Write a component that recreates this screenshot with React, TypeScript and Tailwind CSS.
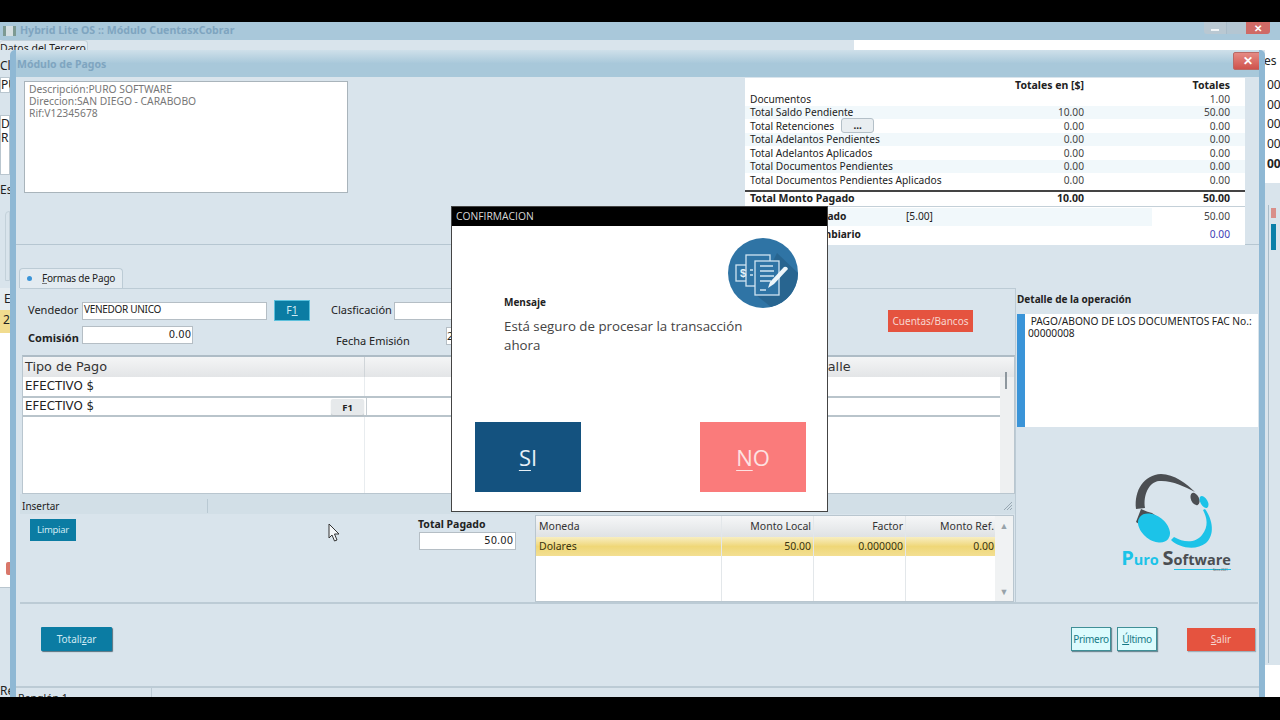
import React from "react";

const totals = [
  ["Documentos", "", "1.00"],
  ["Total Saldo Pendiente", "10.00", "50.00"],
  ["Total Retenciones", "0.00", "0.00"],
  ["Total Adelantos Pendientes", "0.00", "0.00"],
  ["Total Adelantos Aplicados", "0.00", "0.00"],
  ["Total Documentos Pendientes", "0.00", "0.00"],
  ["Total Documentos Pendientes Aplicados", "0.00", "0.00"],
];

function TotalRow({ row, index }: { row: string[]; index: number }) {
  return (
    <div className={`flex h-[13.5px] items-center pl-[5px] pr-[15px] leading-none ${index % 2 === 1 ? "bg-[#f1f8fb]" : ""}`}>
      <span className="flex flex-1 items-center">
        {row[0]}
        {index === 2 && (
          <span className="ml-[7px] flex h-[15px] w-[33px] items-center justify-center rounded-[3px] border border-[#b4c0c8] bg-[#e9eef1] pb-[2px] text-[10px] font-bold">
            ...
          </span>
        )}
      </span>
      <span className="w-[60px] text-right text-[#444]">{row[1]}</span>
      <span className="w-[146px] text-right text-[#444]">{row[2]}</span>
    </div>
  );
}

function DocsIcon() {
  return (
    <svg viewBox="-35 -35 70 70" className="h-[70px] w-[70px]">
      <circle r="35" fill="#2f74a5" />
      <path d="M-7 22 L14 -20 L35 0 A35 35 0 0 1 8 34 Z" fill="#286590" />
      <g fill="none" stroke="#cfe4f1" strokeWidth="1.3">
        <rect x="-27" y="-8" width="17" height="16" fill="#2f74a5" />
        <rect x="-17" y="-18" width="24" height="31" fill="#2f74a5" />
        <rect x="-8" y="-12" width="24" height="34" fill="#2f74a5" />
        <path d="M-3 -7H10M-3 -2H11M-3 3H11M-3 8H8M-13 -3H-10M-13 2H-10M-3 17H3" />
      </g>
      <text x="-23" y="4" fontSize="11" fontWeight="700" fill="#e4f1f8" fontFamily="'Liberation Sans', sans-serif">$</text>
      <path d="M5 15 L7 9 L21 -6 Q24 -7 25 -4 L11 11 Z" fill="#eef6fa" />
    </svg>
  );
}

function Logo() {
  return (
    <div className="flex w-[110px] flex-col items-center">
      <svg viewBox="1130 472 90 80" className="ml-[8px] h-[80px] w-[90px] self-start">
        <path d="M1137 509 C1135 490 1145 475 1162 474 C1175 474 1188 484 1196 492 C1185 486 1172 480 1160 481 C1150 482 1144 495 1146 508 Z" fill="#4b4e52" />
        <ellipse cx="1196" cy="499" rx="4" ry="6.5" transform="rotate(-25 1196 499)" fill="#4b4e52" />
        <ellipse cx="1205" cy="502" rx="3.6" ry="6.5" transform="rotate(-30 1205 502)" fill="#1cc3e8" />
        <path d="M1206 509 C1214 520 1216 535 1207 543 C1197 551 1180 548 1172 540 L1175 537 C1185 543 1197 543 1203 535 C1210 526 1208 518 1204 510 Z" fill="#1cc3e8" />
        <path d="M1137 522 L1142 509 L1149 512 L1143 526 Z M1146 511 L1153 513 L1160 518 L1151 518 Z" fill="#4b4e52" />
        <ellipse cx="1155" cy="528" rx="18" ry="12" transform="rotate(38 1155 528)" fill="#1cc3e8" />
      </svg>
      <div className="-mt-[4px] whitespace-nowrap font-['Open_Sans',sans-serif] font-bold leading-none">
        <span className="text-[20px] text-[#1cc3e8]">P</span>
        <span className="text-[14.5px] text-[#1cc3e8]">uro </span>
        <span className="text-[20px] text-[#4b4e52]">S</span>
        <span className="border-b border-[#1cc3e8] text-[14.5px] text-[#4b4e52]">oftware</span>
      </div>
      <div className="w-full pr-[3px] text-right text-[3px] leading-[5px] text-[#555]">Since 2021</div>
    </div>
  );
}

function MonedaCell({ children, className = "" }: { children: React.ReactNode; className?: string }) {
  return <div className={`border-r border-[#e3e7ea] px-[2px] ${className}`}>{children}</div>;
}

export default function App() {
  return (
    <div className="flex h-[720px] w-[1280px] flex-col overflow-hidden bg-black font-['Noto_Sans',sans-serif] text-[11px] text-[#222]">
      <div className="h-[22px] shrink-0" />
      <div className="relative flex-1 overflow-hidden bg-[#d9e4ec]">
        {/* ventana de atras */}
        <div className="flex h-[18px] items-center bg-[#a9c8da] text-[10.6px] font-bold text-[#7fa5c0]">
          <span className="ml-[3px] mr-[4px] h-[10px] w-[13px] border-x-[3px] border-[#7d9a93] bg-[#d5dfe2]" />
          Hybrid Lite OS :: Módulo CuentasxCobrar
          <div className="ml-auto mr-[10px] flex h-[18px] items-start">
            <span className="flex h-[12px] w-[22px] items-center justify-center rounded-bl-[3px] bg-[#b9c8d2]">
              <span className="mt-[3px] h-[2px] w-[8px] bg-white/80" />
            </span>
            <span className="h-[12px] w-[20px] border-l border-[#a9bcc9] bg-[#b4c6d2]" />
            <span className="flex h-[12px] w-[24px] items-center justify-center rounded-br-[3px] bg-[#cf6a66] text-[10px] font-bold leading-none text-white">✕</span>
          </div>
        </div>
        <div className="flex h-[10px] overflow-hidden">
          <div className="h-[14px] w-[88px] shrink-0 whitespace-nowrap rounded-t-[4px] border-r border-t border-[#c3d1da] bg-[#e3ebf1] text-[10.5px] leading-[14px]">
            <span className="underline">D</span>atos del Tercero
          </div>
          <div className="w-[766px]" />
          <div className="flex-1 bg-white" />
        </div>
        <div className="flex h-[647px]">
          <div className="w-[10px] overflow-hidden whitespace-nowrap text-[12px] leading-[14px]">
            <div className="mt-[9px]">Cl</div>
            <div className="mt-[4px] h-[16px] border border-[#b9c6cf] bg-white">PU</div>
            <div className="mt-[22px] h-[60px] border border-[#b9c6cf] bg-white pt-[1px]">
              D<br />R
            </div>
            <div className="mt-[8px]">Es</div>
            <div className="ml-[5px] mt-[14px] h-[70px] rounded-tl-[4px] border border-[#c3d1da]" />
            <div className="mt-[7px] h-[22px] bg-[#e5ecf1] pl-[4px] leading-[22px]">E</div>
            <div className="h-[23px] bg-[#f1dc8f] pl-[3px] leading-[20px]">2</div>
            <div className="relative h-[255px] border-b border-[#b9c6cf] bg-white">
              <span className="absolute bottom-[12px] left-[6px] h-[13px] w-[4px] rounded-l-[2px] bg-[#d9776a]" />
            </div>
            <div className="mt-[96px]">Re</div>
          </div>
          <div className="w-[1255px]" />
          <div className="flex-1 overflow-hidden whitespace-nowrap bg-white text-[12px] leading-[14px]">
            <div className="-ml-[1px] pt-[4px]">es</div>
            <div className="ml-[2px] mt-[10px]">00</div>
            <div className="ml-[2px] mt-[6px]">00</div>
            <div className="ml-[2px] mt-[5px]">00</div>
            <div className="ml-[2px] mt-[6px]">00</div>
            <div className="ml-[2px] mt-[6px] font-bold">00</div>
            <div className="mt-[12px] flex h-[482px] gap-[2px] bg-[#d9e4ec] pt-[22px]">
              <div className="h-[458px] w-[4px] border-r border-[#a9bcc9]" />
              <div className="mt-[3px] flex flex-col">
                <div className="h-[10px] w-[5px] bg-[#d98f8a]" />
                <div className="mt-[6px] h-[26px] w-[5px] bg-[#0b7fa8]" />
              </div>
            </div>
          </div>
        </div>

        {/* Modulo de Pagos */}
        <div className="absolute left-[10px] top-[28px] flex h-[647px] w-[1255px] flex-col overflow-hidden rounded-t-[5px] border-x-[6px] border-x-[#8fb8d4] bg-[#d9e4ec]">
          <div className="relative flex h-[27px] shrink-0 items-center bg-gradient-to-b from-[#cfe0ea] via-[#a8c8da] to-[#a8c8da] pl-px pt-[2px] text-[10.5px] font-bold text-[#7fa5c0]">
            Módulo de Pagos
            <span className="absolute right-[-3px] top-[2px] flex h-[18px] w-[29px] items-center justify-center rounded-[2px] border border-[#b96a66] bg-gradient-to-b from-[#e58a84] to-[#cf524c] text-[12px] font-bold text-white">✕</span>
          </div>

          <div className="flex h-[168px] shrink-0 border-b border-[#b6c6d1]">
            <div className="ml-[8px] mt-[4px] h-[112px] w-[324px] border border-[#a9b4bb] bg-white px-[4px] pt-[1px] text-[10.3px] leading-[12px] text-[#777]">
              Descripción:PURO SOFTWARE
              <br />
              Direccion:SAN DIEGO - CARABOBO
              <br />
              Rif:V12345678
            </div>
            <div className="ml-auto mr-[14px] mt-px h-[167px] w-[500px] bg-white text-[10.2px] text-[#222]">
              <div className="flex h-[14px] items-center pr-[15px] font-bold leading-none">
                <span className="flex-1 text-right text-[10.5px]">Totales en [$]</span>
                <span className="w-[146px] text-right text-[10.5px]">Totales</span>
              </div>
              {totals.map((row, i) => (
                <TotalRow key={row[0]} row={row} index={i} />
              ))}
              <div className="mt-[3px] flex h-[16px] items-center border-t-2 border-[#444] pl-[5px] pr-[15px] text-[10.5px] font-bold">
                <span className="flex-1">Total Monto Pagado</span>
                <span className="w-[60px] text-right">10.00</span>
                <span className="w-[146px] text-right">50.00</span>
              </div>
              <div className="flex h-[21px] items-center border-t border-[#c4d0d8] pr-[15px]">
                <div className="flex h-[18px] flex-1 items-center bg-[#f1f8fb] pl-[20px]">
                  <span className="w-[141px] font-bold">Monto Abonado</span>
                  <span>[5.00]</span>
                </div>
                <span className="w-[78px] text-right text-[#444]">50.00</span>
              </div>
              <div className="flex h-[17px] items-center pl-[6px] pr-[15px]">
                <span className="flex-1 font-bold">Diferencial Cambiario</span>
                <span className="text-[#3d3db5]">0.00</span>
              </div>
            </div>
          </div>

          <div className="flex h-[359px] shrink-0 pt-[23px]">
            <div className="ml-[4px] flex w-[995px] shrink-0 flex-col">
              <div className="-ml-px flex h-[20px] w-[104px] shrink-0 items-center rounded-t-[4px] border border-b-0 border-[#bccbd5] bg-[#e3ebf1] text-[10px] tracking-[-0.2px]">
                <span className="ml-[7px] mr-[10px] h-[5px] w-[5px] rounded-full bg-[#3a94d8]" />
                <span className="underline decoration-[#777] [text-decoration-skip-ink:none]">F</span>ormas de Pago
              </div>

              <div className="flex h-[67px] shrink-0 border-t border-[#bccbd5]">
                <div className="flex w-[600px] flex-col pl-[8px] pt-[11px]">
                  <div className="flex h-[21px] items-center">
                    <span className="w-[54px]">Vendedor</span>
                    <span className="flex h-[18px] w-[185px] items-center border border-[#b5bec5] bg-white pb-[2px] pl-[1px] text-[10px] tracking-[-0.3px]">VENEDOR UNICO</span>
                    <span className="ml-[7px] flex h-[21px] w-[36px] items-center justify-center border border-[#5cc0dc] bg-[#0b7ca3] text-[10.5px] text-[#cfeaf3]">
                      F<span className="underline">1</span>
                    </span>
                    <span className="ml-[21px] w-[63px]">Clasficación</span>
                    <span className="h-[18px] w-[150px] border border-[#b5bec5] bg-white" />
                  </div>
                  <div className="mt-[5px] flex h-[18px] items-center">
                    <span className="mt-[6px] w-[54px] font-bold">Comisión</span>
                    <span className="h-[18px] w-[111px] border border-[#b5bec5] bg-white pr-[1px] text-right font-['DejaVu_Sans',sans-serif] text-[10px] leading-[16px]">0.00</span>
                    <span className="ml-[143px] mt-[12px] w-[110px]">Fecha Emisión</span>
                    <span className="mt-[2px] h-[18px] w-[60px] border border-[#b5bec5] bg-white leading-[16px]">2</span>
                  </div>
                </div>
                <div className="ml-auto mr-[42px] mt-[21px] flex h-[22px] w-[85px] items-center justify-center bg-[#e5533f] text-[10px] text-[#f7d6cf]">Cuentas/Bancos</div>
              </div>

              <div className="ml-[2px] flex h-[139px] w-[993px] shrink-0 flex-col border border-t-[2px] border-[#b9c6cf] border-t-[#aebcc6] bg-white font-['DejaVu_Sans',sans-serif] text-[11.8px]">
                <div className="flex h-[20px] shrink-0 bg-gradient-to-b from-[#f4f5f6] to-[#e3e5e7] text-[12.8px] leading-[19px] text-[#333]">
                  <span className="w-[342px] border-r border-[#d0d5d9] pl-[2px]">Tipo de Pago</span>
                  <span className="w-[450px] shrink-0 pl-[440px]">Detalle</span>
                </div>
                <div className="flex min-h-0 flex-1">
                  <div className="flex flex-1 flex-col">
                    <div className="flex h-[21px] shrink-0 border-b-2 border-[#b9c4cb]">
                      <span className="w-[342px] border-r border-[#e8ecef] pl-[2px] leading-[19px]">EFECTIVO $</span>
                    </div>
                    <div className="flex h-[19px] shrink-0 border-b-2 border-[#b9c4cb]">
                      <span className="flex w-[342px] items-center justify-between pl-[2px] leading-[15px]">
                        EFECTIVO $
                        <span className="mr-[1px] mt-[1px] flex h-[16px] w-[33px] items-center justify-center rounded-[2px] bg-[#e6e9eb] font-['Noto_Sans',sans-serif] text-[9.5px] font-bold shadow-[0_1px_1px_#b5bcc1]">F1</span>
                      </span>
                      <span className="ml-px flex-1 border-l border-[#c7ced3]" />
                    </div>
                    <div className="flex-1">
                      <div className="h-full w-[342px] border-r border-[#e8ecef]" />
                    </div>
                  </div>
                  <div className="w-[14px] shrink-0 bg-[#eef0f1] pl-[5px]">
                    <div className="-mt-[5px] h-[17px] w-[2px] bg-[#8d979e]" />
                  </div>
                </div>
              </div>

              <div className="flex h-[20px] shrink-0 items-center bg-[#d2dfe7] pt-[3px] text-[10px]">
                <span className="ml-[2px] w-[186px] border-r border-[#b9c9d3] leading-[14px]">Insertar</span>
                <svg viewBox="0 0 10 10" className="ml-auto mr-[2px] h-[10px] w-[10px]">
                  <path d="M9 1 L1 9 M9 4 L4 9 M9 7 L7 9" stroke="#97a7b2" strokeWidth="1" />
                </svg>
              </div>

              <div className="relative flex h-[90px] shrink-0 border-b-2 border-[#bccbd5]">
                <div className="ml-[10px] mt-[5px] flex h-[22px] w-[46px] items-center justify-center bg-[#0b7ca3] text-[9.5px] tracking-[-0.3px] text-[#cfeaf3]">Limpiar</div>
                <svg viewBox="0 0 12 19" className="absolute left-[308px] top-[9px] h-[19px] w-[12px]">
                  <path d="M1 1 V15 L4 12 L6.500 18 L9 17 L6.500 11 L11 11 Z" fill="#f4f7f9" stroke="#333" strokeWidth="1" />
                </svg>
                <div className="ml-[343px] mt-[3px] flex w-[97px] flex-col">
                  <span className="-ml-px h-[15px] whitespace-nowrap text-[10.5px] font-bold leading-[14px] text-[#222]">Total Pagado</span>
                  <span className="h-[18px] border border-[#b5bec5] bg-white pr-[2px] text-right font-['DejaVu_Sans',sans-serif] text-[10px] leading-[16px]">50.00</span>
                </div>
                <div className="ml-[19px] mt-px flex h-[87px] w-[479px] border border-[#b9c6cf] bg-white text-[10.5px]">
                  <div className="flex flex-1 flex-col">
                    <div className="grid h-[21px] shrink-0 grid-cols-[186px_92px_92px_1fr] bg-gradient-to-b from-[#f6f7f8] to-[#dfe2e4] leading-[20px] text-[#333]">
                      <MonedaCell className="pl-[3px]">Moneda</MonedaCell>
                      <MonedaCell className="text-right">Monto Local</MonedaCell>
                      <MonedaCell className="text-right">Factor</MonedaCell>
                      <div className="pr-px text-right">Monto Ref.</div>
                    </div>
                    <div className="grid h-[19px] shrink-0 grid-cols-[186px_92px_92px_1fr] leading-[18px] text-[#3a3410]">
                      <MonedaCell className="bg-gradient-to-b from-[#f8eec0] via-[#efd777] to-[#f3df92] pl-[3px]">Dolares</MonedaCell>
                      <MonedaCell className="bg-gradient-to-b from-[#f8eec0] via-[#efd777] to-[#f3df92] text-right">50.00</MonedaCell>
                      <MonedaCell className="bg-gradient-to-b from-[#f8eec0] via-[#efd777] to-[#f3df92] text-right">0.000000</MonedaCell>
                      <div className="bg-gradient-to-b from-[#f8eec0] via-[#efd777] to-[#f3df92] pr-px text-right">0.00</div>
                    </div>
                    <div className="grid flex-1 grid-cols-[186px_92px_92px_1fr]">
                      <MonedaCell>{""}</MonedaCell>
                      <MonedaCell>{""}</MonedaCell>
                      <MonedaCell>{""}</MonedaCell>
                      <div />
                    </div>
                  </div>
                  <div className="flex w-[18px] shrink-0 flex-col items-center justify-between bg-[#f0f2f3] py-[5px] text-[9px] leading-none text-[#98a2a9]">
                    <span>▲</span>
                    <span>▼</span>
                  </div>
                </div>
              </div>
            </div>

            <div className="mt-[20px] flex h-[316px] w-[243px] shrink-0 flex-col border-b-2 border-l border-[#bccbd5] pl-px text-[10.2px]">
              <div className="h-[26px] pt-[4px] text-[10px] font-bold leading-[14px]">Detalle de la operación</div>
              <div className="flex h-[113px] w-[241px] shrink-0 bg-white leading-[12px]">
                <span className="w-[8px] shrink-0 bg-[#3a94d8]" />
                <p className="whitespace-nowrap pl-[3px] pt-[1px]">
                  &nbsp;PAGO/ABONO DE LOS DOCUMENTOS FAC No.:
                  <br />
                  00000008
                </p>
              </div>
              <div className="ml-[104px] mt-[45px]">
                <Logo />
              </div>
            </div>
          </div>

          <div className="flex h-[84px] shrink-0 items-start border-b-2 border-[#bccbd5] pl-[25px] pr-[4px] pt-[23px] text-[10px]">
            <div className="flex h-[24px] w-[71px] items-center justify-center rounded-[1px] bg-[#0b7ca3] text-[#cfeaf3] shadow-[1px_1px_1px_#55707f]">
              Totali<span className="underline">z</span>ar
            </div>
            <div className="ml-auto flex h-[24px] w-[40px] items-center justify-center border border-[#3f8f97] bg-[#dcfbfd] tracking-[-0.3px] text-[#167a86] shadow-[1px_1px_1px_#6f8b96]">Primero</div>
            <div className="ml-[6px] flex h-[24px] w-[40px] items-center justify-center border border-[#3f8f97] bg-[#dcfbfd] tracking-[-0.3px] text-[#167a86] shadow-[1px_1px_1px_#6f8b96]">
              <span className="underline">Ú</span>ltimo
            </div>
            <div className="ml-[30px] mt-px flex h-[23px] w-[68px] items-center justify-center bg-[#e5533f] text-[#f7d6cf] shadow-[1px_1px_1px_#9fb0ba]">
              <span className="underline">S</span>alir
            </div>
          </div>
          <div className="flex flex-1 overflow-hidden">
            <span className="w-[136px] border-r border-[#bccbd5] pl-[2px] pt-[3px] text-[10.5px]">Renglón 1</span>
          </div>
        </div>

        {/* CONFIRMACION */}
        <div className="absolute left-[451px] top-[184px] flex h-[306px] w-[377px] flex-col border border-[#444] bg-white font-['Open_Sans',sans-serif]">
          <div className="flex h-[19px] shrink-0 items-center bg-black pl-[4px] text-[10.3px] text-[#d8d8d8]">CONFIRMACION</div>
          <div className="relative flex-1">
            <div className="absolute right-[29px] top-[12px]">
              <DocsIcon />
            </div>
            <p className="ml-[52px] pt-[69px] text-[10px] font-bold leading-[14px] text-[#222]">Mensaje</p>
            <p className="ml-[52px] mt-[8px] w-[250px] text-[13.3px] leading-[19px] text-[#444]">Está seguro de procesar la transacción ahora</p>
            <div className="ml-[23px] mr-[21px] mt-[67px] flex justify-between">
              <div className="flex h-[70px] w-[106px] items-center justify-center bg-[#14527f] text-[22px] text-[#e6f0f7]">
                <span className="underline decoration-1 underline-offset-4">S</span>I
              </div>
              <div className="flex h-[70px] w-[106px] items-center justify-center bg-[#fa7b7b] text-[22px] text-[#fde2e2]">
                <span className="underline decoration-1 underline-offset-4">N</span>O
              </div>
            </div>
          </div>
        </div>
      </div>
      <div className="h-[23px] shrink-0" />
    </div>
  );
}
